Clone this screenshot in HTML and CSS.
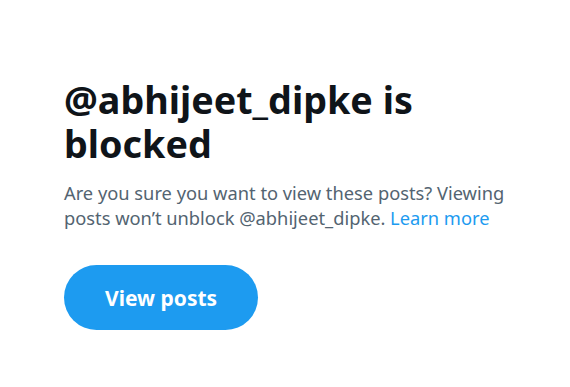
FILE: index.html
```html
<!DOCTYPE html>
<html lang="en">
<head>
    <meta charset="UTF-8">
    <meta name="viewport" content="width=device-width, initial-scale=1.0">
    <title>Blocked account</title>
    <link rel="stylesheet" href="styles.css">
</head>
<body>
    <div class="blocked">
        <h1 class="blocked-title">@abhijeet_dipke is blocked</h1>
        <p class="blocked-text">
            Are you sure you want to view these posts? Viewing posts won’t unblock @abhijeet_dipke.
            <a href="#" class="learn-link">Learn more</a>
        </p>
        <button class="view-btn">View posts</button>
    </div>
</body>
</html>
```

FILE: styles.css
```css
* {
    box-sizing: border-box;
}
body {
    margin: 0;
    background: #fff;
    font-family: "Noto Sans", "Open Sans", sans-serif;
}
.blocked {
    width: 514px;
    padding: 78px 0 0 64px;
}
.blocked-title {
    margin: 0;
    font-size: 37.7px;
    line-height: 44px;
    font-weight: 700;
    color: #0f1419;
}
.blocked-text {
    margin: 14px 0 0;
    font-size: 18.3px;
    line-height: 25px;
    color: #536471;
}
.learn-link {
    color: #1d9bf0;
    text-decoration: none;
}
.view-btn {
    margin-top: 35px;
    height: 65px;
    padding: 0 41px;
    border: none;
    border-radius: 9999px;
    background: #1d9bf0;
    color: #fff;
    font-family: inherit;
    font-size: 21px;
    font-weight: 700;
    cursor: pointer;
}
```
